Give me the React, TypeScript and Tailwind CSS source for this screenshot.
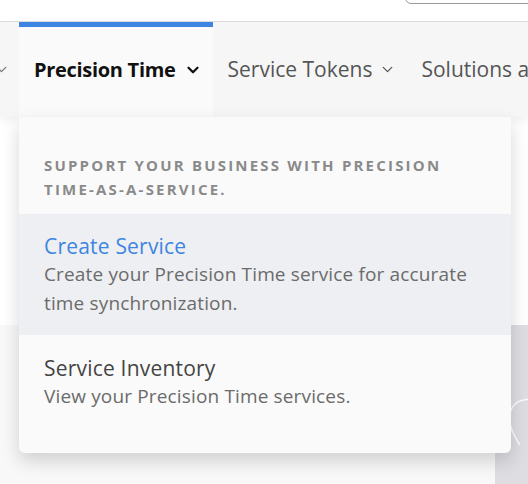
import { ChevronDown } from "lucide-react";

const font = { fontFamily: '"Open Sans", "Liberation Sans", sans-serif' };

function NavItem({ label, active }: { label: string; active?: boolean }) {
  return (
    <div
      className={
        active
          ? "relative flex h-full shrink-0 items-center gap-2 border-t-[5px] border-[#3d85e0] bg-[#fafafa] pl-[15px] pr-[11px] pb-[5px]"
          : "flex h-full shrink-0 items-center gap-[7px] pl-[15px] pr-[10px] pt-[5px] pb-[5px]"
      }
    >
      <span
        className={
          active
            ? "whitespace-nowrap text-[20px] font-bold tracking-[-0.3px] text-[#111]"
            : "whitespace-nowrap text-[21px] tracking-[0px] text-[#555]"
        }
      >
        {label}
      </span>
      {label !== "Solutions and More" && (
        <ChevronDown
          size={active ? 18 : 17}
          strokeWidth={active ? 3 : 1.8}
          className={active ? "text-[#111]" : "text-[#555]"}
        />
      )}
    </div>
  );
}

function HeroLines() {
  return (
    <svg className="absolute inset-0 h-full w-full" viewBox="0 0 528 367" preserveAspectRatio="none">
      <g fill="none" stroke="#ffffff" strokeWidth="1.5" opacity="0.9">
        <path d="M-20 90 L30 60" />
        <path d="M-10 120 L25 170" />
        <path d="M520 120 C500 90 510 70 540 75" />
        <path d="M500 330 L540 360" />
      </g>
    </svg>
  );
}

export default function App() {
  return (
    <div className="relative h-[484px] w-[528px] overflow-hidden bg-white" style={font}>
      <div className="relative h-[22px] border-b border-[#dedede] bg-white">
        <div className="absolute -top-[20px] left-[405px] h-[24px] w-[160px] rounded-md border border-[#9a9a9a] bg-white" />
      </div>

      <div className="relative z-10 flex h-[95px] items-stretch bg-[#f6f6f6] shadow-[0_4px_8px_rgba(0,0,0,0.06)]">
        <div className="flex h-full w-[19px] shrink-0 items-center pb-[5px] pt-[5px]">
          <ChevronDown size={17} strokeWidth={1.8} className="-ml-[7px] text-[#777]" />
        </div>
        <NavItem label="Precision Time" active />
        <NavItem label="Service Tokens" />
        <NavItem label="Solutions and More" />
      </div>

      <div className="relative h-[367px] bg-[#dddde2]">
        <HeroLines />
        <div className="relative mt-[208px] h-[200px] w-[495px] bg-[#f8f8f8]" />
      </div>

      <div className="absolute left-[19px] top-[117px] z-20 w-[492px] rounded-b-md bg-[#fafafa] shadow-[0_8px_18px_rgba(0,0,0,0.16)]">
        <div className="pb-[13px] pl-[25px] pr-[40px] pt-[36px]">
          <p className="text-[15px] font-bold uppercase leading-[24px] tracking-[2.2px] text-[#8a8a8a]">
            Support your business with precision time-as-a-service.
          </p>
        </div>
        <div className="bg-[#eeeff2] pb-[17px] pl-[25px] pr-[30px] pt-[18px]">
          <div className="text-[21px] leading-[28px] tracking-[0.2px] text-[#3d85e0]">Create Service</div>
          <div className="text-[19px] leading-[29px] tracking-[0.15px] text-[#6b6b6b]">
            Create your Precision Time service for accurate time synchronization.
          </div>
        </div>
        <div className="pb-[42px] pl-[25px] pr-[30px] pt-[19px]">
          <div className="text-[21px] leading-[28px] tracking-[0.2px] text-[#444]">Service Inventory</div>
          <div className="text-[19px] leading-[29px] tracking-[0.15px] text-[#6b6b6b]">
            View your Precision Time services.
          </div>
        </div>
      </div>
    </div>
  );
}
